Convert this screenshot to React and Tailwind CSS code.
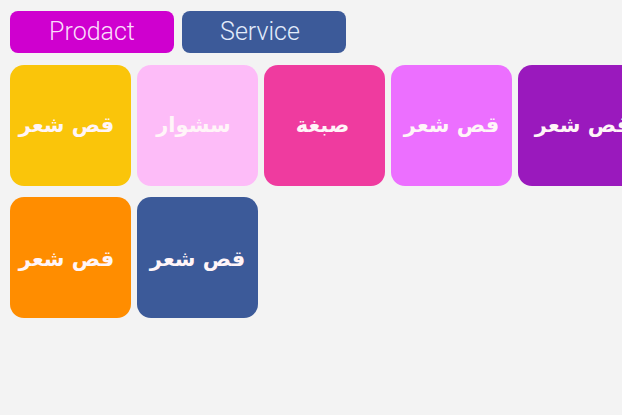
const tabs = [
  { label: "Prodact", style: "bg-[#cf00cf] text-[#fbdcfb]" },
  { label: "Service", style: "bg-[#3c5a99] text-[#e2ecfb] pr-2" },
];

const rows = [
  {
    style: "pb-0",
    tiles: [
      { label: "قص شعر", style: "bg-[#fac50a] pr-2" },
      { label: "سشوار", style: "bg-[#fdbcf8] pr-2" },
      { label: "صبغة", style: "bg-[#ef3b9f] pr-1" },
      { label: "قص شعر", style: "bg-[#ec6fff]" },
      { label: "قص شعر", style: "bg-[#9a19bd] pl-2" },
    ],
  },
  {
    style: "pt-1",
    tiles: [
      { label: "قص شعر", style: "bg-[#ff8d00] pr-2" },
      { label: "قص شعر", style: "bg-[#3c5a99]" },
    ],
  },
];

function Tab({ label, style }) {
  return (
    <button
      type="button"
      className={`flex h-[42px] w-[164px] shrink-0 items-center justify-center rounded-lg pb-[2px] font-['Roboto','Open_Sans',sans-serif] text-[25px] font-light leading-none ${style}`}
    >
      {label}
    </button>
  );
}

function Tile({ label, style, rowStyle }) {
  return (
    <button
      type="button"
      lang="ar"
      dir="rtl"
      className={`flex size-[121px] shrink-0 items-center justify-center whitespace-nowrap rounded-[14px] font-['DejaVu_Sans',sans-serif] text-[21px] font-bold leading-none text-[#fff5f8] ${rowStyle} ${style}`}
    >
      {label}
    </button>
  );
}

export default function App() {
  return (
    <main className="flex min-h-screen flex-col gap-3 overflow-hidden bg-[#f3f3f3] pl-[10px] pt-[11px]">
      <nav className="flex gap-2">
        {tabs.map((tab) => (
          <Tab key={tab.label} {...tab} />
        ))}
      </nav>
      <div className="flex flex-col gap-[11px]">
        {rows.map((row, index) => (
          <section key={index} className="flex gap-[6px]">
            {row.tiles.map((tile, position) => (
              <Tile key={position} {...tile} rowStyle={row.style} />
            ))}
          </section>
        ))}
      </div>
    </main>
  );
}
